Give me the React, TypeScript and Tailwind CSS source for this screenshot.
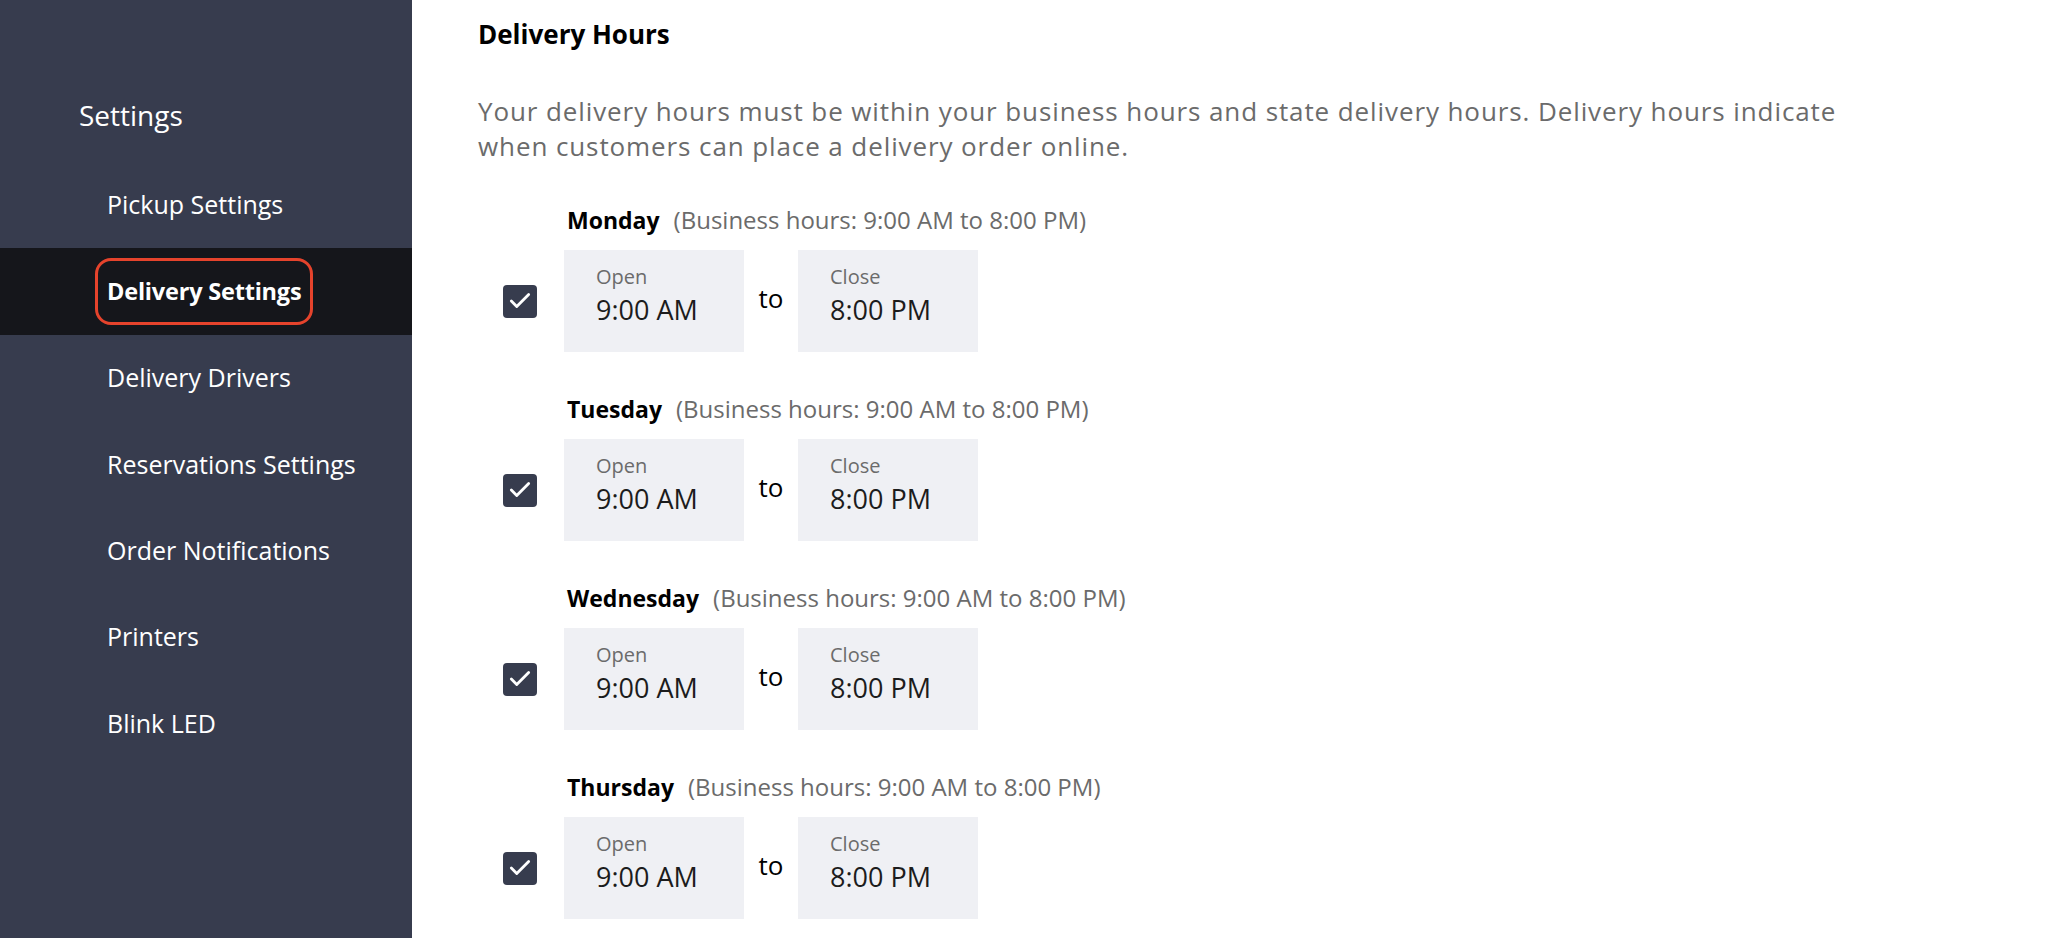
import { Check } from "lucide-react";

const menu = [
  "Pickup Settings",
  "Delivery Settings",
  "Delivery Drivers",
  "Reservations Settings",
  "Order Notifications",
  "Printers",
  "Blink LED",
];

const days = ["Monday", "Tuesday", "Wednesday", "Thursday"];

function TimeBox({ label, value }: { label: string; value: string }) {
  return (
    <div className="w-[180px] h-[102px] bg-[#eff0f4] pl-[32px] pt-[14px] flex flex-col">
      <span className="text-[20px] leading-[26px] text-[#6b6b6b]">{label}</span>
      <span className="text-[27px] leading-[36px] text-[#1c1c1c] mt-[2px]">{value}</span>
    </div>
  );
}

function DayRow({ day }: { day: string }) {
  return (
    <div className="flex flex-col">
      <div className="pl-[89px] h-[30px] flex items-center gap-[14px]">
        <span className="text-[23px] font-bold text-black">{day}</span>
        <span className="text-[24px] text-[#6b6b6b]">(Business hours: 9:00 AM to 8:00 PM)</span>
      </div>
      <div className="flex items-center mt-[15px]">
        <div className="ml-[25px] w-[34px] h-[33px] rounded-[4px] bg-[#373c4e] flex items-center justify-center">
          <Check size={26} strokeWidth={2.6} className="text-white" />
        </div>
        <div className="ml-[27px]">
          <TimeBox label="Open" value="9:00 AM" />
        </div>
        <span className="w-[54px] text-center text-[26px] text-black -mt-[6px]">to</span>
        <TimeBox label="Close" value="8:00 PM" />
      </div>
    </div>
  );
}

export default function App() {
  return (
    <div
      className="flex w-full h-[938px] overflow-hidden bg-white"
      style={{ fontFamily: '"Open Sans", "Noto Sans", sans-serif' }}
    >
      {/* sidebar */}
      <aside className="w-[412px] shrink-0 bg-[#373c4e] text-white pt-[95px]">
        <div className="pl-[79px] text-[28px] leading-[40px] mb-[27px]">Settings</div>
        <nav className="flex flex-col">
          {menu.map((item) =>
            item === "Delivery Settings" ? (
              <div key={item} className="h-[86.4px] bg-[#15161b] flex items-center pl-[95px]">
                <span className="h-[67px] flex items-center px-[9px] border-[3px] border-[#e5432c] rounded-[16px] text-[23.5px] tracking-[-0.2px] font-bold">
                  {item}
                </span>
              </div>
            ) : (
              <div key={item} className="h-[86.4px] flex items-center pl-[107px] text-[25px]">
                {item}
              </div>
            )
          )}
        </nav>
      </aside>

      {/* content */}
      <main className="flex-1 pl-[66px] pt-[18px]">
        <h2 className="text-[26px] leading-[32px] font-bold text-black">Delivery Hours</h2>
        <p className="mt-[44px] text-[26px] leading-[35px] tracking-[0.9px] text-[#6b6b6b]">
          Your delivery hours must be within your business hours and state delivery hours. Delivery hours indicate
          <br />
          when customers can place a delivery order online.
        </p>
        <div className="mt-[41px] flex flex-col gap-[42px]">
          {days.map((d) => (
            <DayRow key={d} day={d} />
          ))}
        </div>
      </main>
    </div>
  );
}
